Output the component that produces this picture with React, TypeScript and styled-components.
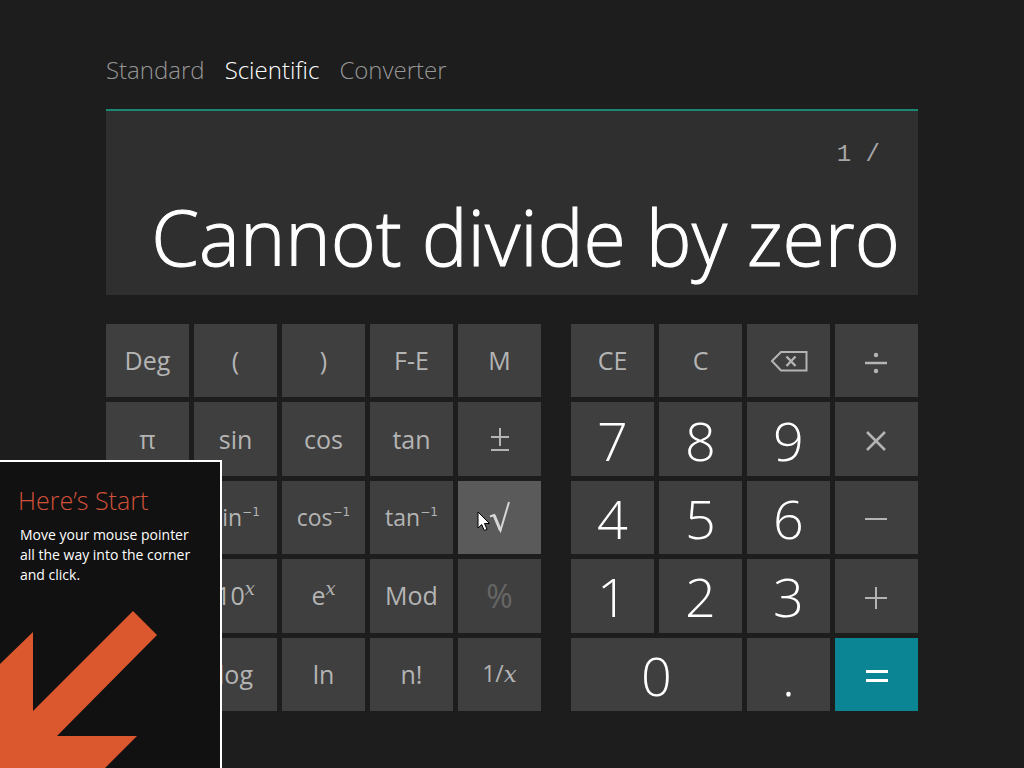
import React from "react";
import styled, { createGlobalStyle } from "styled-components";

const GlobalStyle = createGlobalStyle`
  *, *::before, *::after { box-sizing: border-box; }
  body {
    margin: 0;
    background: #1d1d1d;
    color: #fff;
    font-family: "Open Sans", "Noto Sans", sans-serif;
  }
  button { font-family: inherit; cursor: inherit; }
`;

const Page = styled.div`
  position: relative;
  min-height: 100vh;
  overflow: hidden;
`;

const Calculator = styled.main`
  padding: 50px 106px 56px;
`;

const Modes = styled.nav`
  display: flex;
  gap: 20px;
  height: 40px;
  align-items: center;
  margin-bottom: 19px;
`;

const ModeButton = styled.button<{ $active?: boolean }>`
  padding: 0;
  border: 0;
  background: none;
  font-size: 24px;
  font-weight: 300;
  line-height: 40px;
  color: ${(p) => (p.$active ? "#ffffff" : "#969696")};
`;

const Display = styled.section`
  height: 186px;
  padding: 26px 18px 0;
  border-top: 2px solid #1b8671;
  background: #2f2f2f;
  text-align: right;
`;

const Expression = styled.div`
  padding-right: 20px;
  font: 24px/36px "Liberation Mono", monospace;
  color: #a6a6a6;
  white-space: pre;
`;

const Result = styled.output`
  display: block;
  margin-top: 10px;
  font-size: 77px;
  font-weight: 300;
  line-height: 108px;
  white-space: nowrap;
  -webkit-text-stroke: 1px currentColor;
`;

const Pads = styled.div`
  display: grid;
  grid-template-columns: 435fr 347fr;
  gap: 30px;
  margin-top: 29px;
`;

const Pad = styled.div<{ $columns: number }>`
  display: grid;
  grid-template-columns: repeat(${(p) => p.$columns}, minmax(0, 1fr));
  grid-template-rows: repeat(5, 1fr);
  gap: 5px;
  height: 387px;
`;

type Tone = "plain" | "operator" | "digit" | "hover" | "accent" | "disabled";

interface ToneStyle {
  background: string;
  color: string;
  size: string;
  weight: number;
  padding: string;
}

const plain: ToneStyle = {
  background: "#3f3f3f",
  color: "#b4b4b4",
  size: "25px",
  weight: 400,
  padding: "0",
};

const tones: Record<Tone, ToneStyle> = {
  plain,
  operator: { ...plain, padding: "4px 2px 0 0" },
  digit: { ...plain, color: "#ffffff", size: "54px", weight: 300, padding: "1px 0 0" },
  hover: { ...plain, background: "#5a5a5a", color: "#d6d6d6" },
  accent: { ...plain, background: "#0b8494", color: "#ffffff", padding: "4px 0 0" },
  disabled: { ...plain, color: "#666666", size: "32px" },
};

const Key = styled.button<{ $tone: Tone; $wide?: boolean; $small?: boolean }>`
  position: relative;
  display: flex;
  align-items: center;
  justify-content: center;
  min-width: 0;
  padding: ${(p) => tones[p.$tone].padding};
  border: 0;
  grid-column: ${(p) => (p.$wide ? "span 2" : "auto")};
  background: ${(p) => tones[p.$tone].background};
  color: ${(p) => tones[p.$tone].color};
  font-size: ${(p) => (p.$small ? "23px" : tones[p.$tone].size)};
  font-weight: ${(p) => tones[p.$tone].weight};
  line-height: 1;
  white-space: nowrap;
`;

const PowerLabel = styled.span`
  display: flex;
`;

const Power = styled.sup`
  align-self: flex-start;
  margin-top: -2px;
  font: 12px/16px "DejaVu Sans", sans-serif;
`;

const Variable = styled.i`
  font-family: "DejaVu Serif", serif;
`;

const PowerVariable = styled(Variable)`
  font-size: 18px;
`;

const Glyph = styled.svg`
  display: block;
  fill: none;
  stroke: currentColor;
  stroke-width: 2;
`;

const Tip = styled.aside`
  position: absolute;
  left: 0;
  bottom: 0;
  width: 222px;
  height: 308px;
  padding: 20px 0 0 18px;
  border: solid #fff;
  border-width: 2px 2px 0 0;
  background: #111;
`;

const TipTitle = styled.h2`
  margin: 0;
  font-size: 25px;
  font-weight: 300;
  line-height: 36px;
  color: #d3513a;
`;

const TipText = styled.p`
  margin: 7px 0 0 2px;
  font-size: 14px;
  line-height: 20px;
`;

const TipArrow = styled.svg`
  position: absolute;
  left: 0;
  bottom: 0;
  fill: #db572e;
`;

const Pointer = styled.svg`
  position: absolute;
  left: 19px;
  top: 30px;
`;

const power = (base: string, exponent: React.ReactNode) => (
  <PowerLabel>
    {base}
    <Power>{exponent}</Power>
  </PowerLabel>
);

const PlusMinus = () => (
  <Glyph width="20" height="28" viewBox="0 0 20 28" aria-hidden="true">
    <path d="M10 3v18M1 12h18M1 25h18" />
  </Glyph>
);

const Root = () => (
  <Glyph width="24" height="32" viewBox="0 0 24 32" aria-hidden="true">
    <path d="M2 15.500l4-1.500 6.500 15.500L21 1" />
    <path d="M6 14l6.500 15.500" strokeWidth="3" />
  </Glyph>
);

const Backspace = () => (
  <Glyph width="38" height="22" viewBox="0 0 38 22" aria-hidden="true">
    <path d="M2 11L11 2H36.500V20.500H11Z" />
    <path d="M16.500 6.500l9 9.500M25.500 6.500l-9 9.500" strokeWidth="2.400" />
  </Glyph>
);

const Divide = () => (
  <Glyph width="22" height="22" viewBox="0 0 22 22" aria-hidden="true">
    <path d="M0 11h22" strokeWidth="2.500" />
    <circle cx="11" cy="3" r="2.200" fill="currentColor" stroke="none" />
    <circle cx="11" cy="19" r="2.200" fill="currentColor" stroke="none" />
  </Glyph>
);

const Times = () => (
  <Glyph width="20" height="20" viewBox="0 0 20 20" aria-hidden="true">
    <path d="M1 1l18 18M19 1L1 19" strokeWidth="2.500" />
  </Glyph>
);

const Minus = () => (
  <Glyph width="22" height="22" viewBox="0 0 22 22" aria-hidden="true">
    <path d="M0 11h22" />
  </Glyph>
);

const Plus = () => (
  <Glyph width="22" height="22" viewBox="0 0 22 22" aria-hidden="true">
    <path d="M0 11h22M11 0v22" />
  </Glyph>
);

const Equals = () => (
  <Glyph width="22" height="14" viewBox="0 0 22 14" aria-hidden="true">
    <path d="M0 2.500h22M0 11.500h22" strokeWidth="3" />
  </Glyph>
);

const Arrow = () => (
  <Pointer width="14" height="22" viewBox="0 0 14 22" aria-hidden="true">
    <path
      d="M1 1V17L4.700 13.500L7.300 19.500L10 18.300L7.500 12.500H12.500Z"
      fill="#fff"
      stroke="#000"
    />
  </Pointer>
);

interface KeySpec {
  id: string;
  label?: React.ReactNode;
  tone?: Tone;
  wide?: boolean;
  small?: boolean;
}

const scientific: KeySpec[] = [
  { id: "deg", label: "Deg" },
  { id: "open", label: "(" },
  { id: "close", label: ")" },
  { id: "fe", label: "F-E" },
  { id: "m", label: "M" },
  { id: "pi", label: "π" },
  { id: "sin", label: "sin" },
  { id: "cos", label: "cos" },
  { id: "tan", label: "tan" },
  { id: "sign", label: <PlusMinus /> },
  { id: "c1r3" },
  { id: "asin", label: power("sin", "−1"), small: true },
  { id: "acos", label: power("cos", "−1"), small: true },
  { id: "atan", label: power("tan", "−1"), small: true },
  { id: "root", label: <><Root /><Arrow /></>, tone: "hover" },
  { id: "c1r4" },
  { id: "pow10", label: power("10", <PowerVariable>x</PowerVariable>) },
  { id: "exp", label: power("e", <PowerVariable>x</PowerVariable>) },
  { id: "mod", label: "Mod" },
  { id: "percent", label: "%", tone: "disabled" },
  { id: "c1r5" },
  { id: "log", label: "log" },
  { id: "ln", label: "ln" },
  { id: "fact", label: "n!" },
  { id: "inv", label: <span>1/<Variable>x</Variable></span>, small: true },
];

const numeric: KeySpec[] = [
  { id: "ce", label: "CE" },
  { id: "c", label: "C" },
  { id: "back", label: <Backspace /> },
  { id: "div", label: <Divide />, tone: "operator" },
  { id: "7", label: "7", tone: "digit" },
  { id: "8", label: "8", tone: "digit" },
  { id: "9", label: "9", tone: "digit" },
  { id: "mul", label: <Times />, tone: "operator" },
  { id: "4", label: "4", tone: "digit" },
  { id: "5", label: "5", tone: "digit" },
  { id: "6", label: "6", tone: "digit" },
  { id: "sub", label: <Minus />, tone: "operator" },
  { id: "1", label: "1", tone: "digit" },
  { id: "2", label: "2", tone: "digit" },
  { id: "3", label: "3", tone: "digit" },
  { id: "add", label: <Plus />, tone: "operator" },
  { id: "0", label: "0", tone: "digit", wide: true },
  { id: "dot", label: ".", tone: "digit" },
  { id: "eq", label: <Equals />, tone: "accent" },
];

const renderKey = ({ id, label, tone = "plain", wide, small }: KeySpec) => (
  <Key
    key={id}
    type="button"
    $tone={tone}
    $wide={wide}
    $small={small}
    disabled={tone === "disabled"}
  >
    {label}
  </Key>
);

export default function App() {
  return (
    <Page>
      <GlobalStyle />
      <Calculator>
        <Modes>
          <ModeButton type="button">Standard</ModeButton>
          <ModeButton type="button" $active>Scientific</ModeButton>
          <ModeButton type="button">Converter</ModeButton>
        </Modes>
        <Display>
          <Expression>1 /</Expression>
          <Result>Cannot divide by zero</Result>
        </Display>
        <Pads>
          <Pad $columns={5}>{scientific.map(renderKey)}</Pad>
          <Pad $columns={4}>{numeric.map(renderKey)}</Pad>
        </Pads>
      </Calculator>
      <Tip>
        <TipTitle>Here’s Start</TipTitle>
        <TipText>
          Move your mouse pointer
          <br />
          all the way into the corner
          <br />
          and click.
        </TipText>
        <TipArrow width="160" height="160" viewBox="0 0 160 160" aria-hidden="true">
          <path d="M133 3L157 27L57 128H137L105 160H0V56L33 24V103Z" />
        </TipArrow>
      </Tip>
    </Page>
  );
}
